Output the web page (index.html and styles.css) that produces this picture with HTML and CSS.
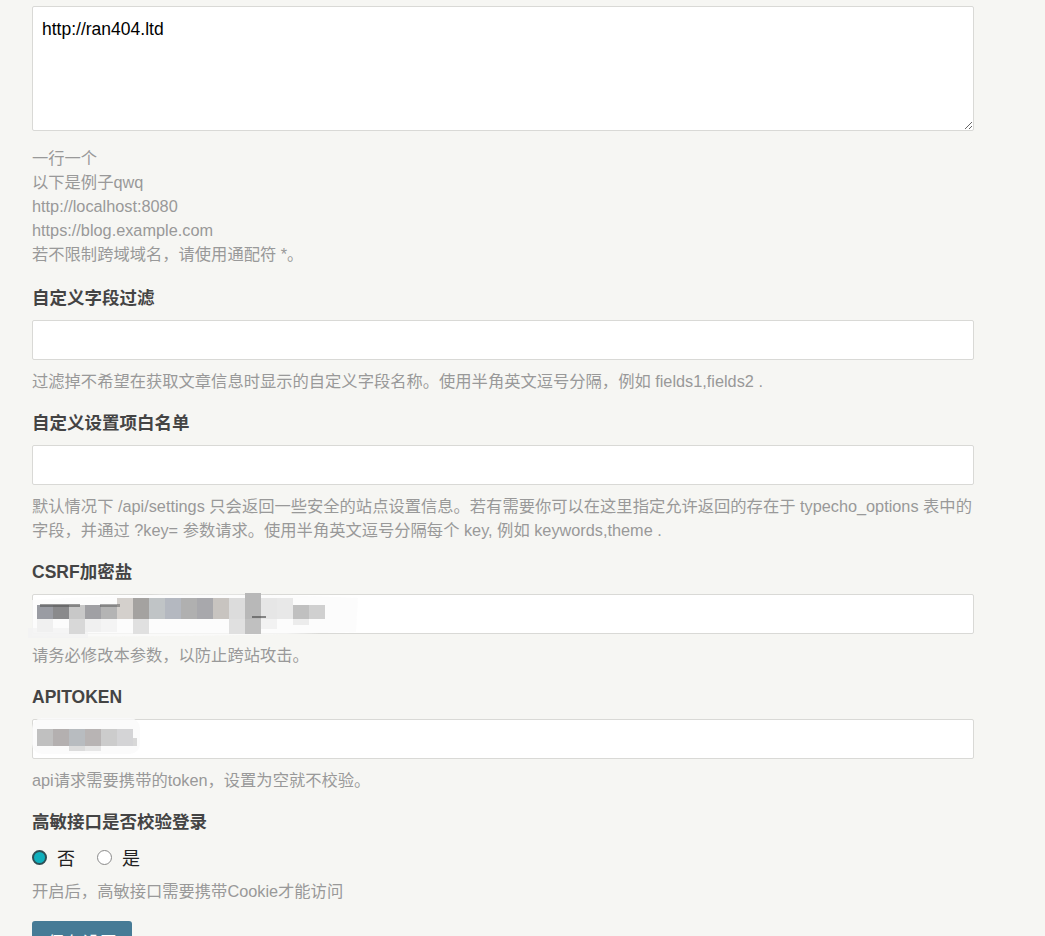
FILE: index.html
```html
<!DOCTYPE html>
<html lang="zh-CN">
<head>
<meta charset="utf-8">
<title>设置</title>
<link rel="stylesheet" href="styles.css">
</head>
<body>
<form class="options">
  <ul class="option first">
    <li>
      <textarea class="textarea">http://ran404.ltd</textarea>
      <div class="description desc-first">一行一个<br>以下是例子qwq<br>http://localhost:8080<br>https://blog.example.com<br>若不限制跨域域名，请使用通配符 *。</div>
    </li>
  </ul>
  <ul class="option">
    <li>
      <label class="label">自定义字段过滤</label>
      <input class="text" type="text">
      <div class="description">过滤掉不希望在获取文章信息时显示的自定义字段名称。使用半角英文逗号分隔，例如 fields1,fields2 .</div>
    </li>
  </ul>
  <ul class="option">
    <li>
      <label class="label">自定义设置项白名单</label>
      <input class="text" type="text">
      <div class="description">默认情况下 /api/settings 只会返回一些安全的站点设置信息。若有需要你可以在这里指定允许返回的存在于 typecho_options 表中的<br>字段，并通过 ?key= 参数请求。使用半角英文逗号分隔每个 key, 例如 keywords,theme .</div>
    </li>
  </ul>
  <ul class="option">
    <li>
      <label class="label">CSRF加密盐</label>
      <div class="field">
        <input class="text" type="text">
        <svg class="mosaic" width="340" height="52" viewBox="0 0 340 52">
          <path d="M4 12 Q150 2 330 10 L328 44 Q150 50 4 48 Z" fill="#fbfbfb" opacity="0.75"/>
          <rect x="0" y="40" width="60" height="10" fill="#f2f2f2" opacity="0.8"/>
          <rect x="9" y="17" width="16" height="14" fill="#9a9ca3"/>
          <rect x="25" y="17" width="16" height="14" fill="#8a8a8c"/>
          <rect x="41" y="17" width="16" height="14" fill="#c8c8c8"/>
          <rect x="57" y="17" width="16" height="14" fill="#a0a0a4"/>
          <rect x="73" y="17" width="16" height="14" fill="#b4b4b4"/>
          <rect x="89" y="10" width="16" height="21" fill="#d4d0cc"/>
          <rect x="105" y="10" width="16" height="21" fill="#a4a2a0"/>
          <rect x="121" y="10" width="16" height="21" fill="#c0c4c6"/>
          <rect x="137" y="10" width="16" height="21" fill="#b4b8c0"/>
          <rect x="153" y="10" width="16" height="21" fill="#b0b0b0"/>
          <rect x="169" y="10" width="16" height="21" fill="#a8a8ac"/>
          <rect x="185" y="10" width="16" height="21" fill="#c8c4c0"/>
          <rect x="201" y="10" width="16" height="21" fill="#dcdcdc"/>
          <rect x="217" y="5" width="16" height="26" fill="#b8b8b8"/>
          <rect x="233" y="10" width="16" height="21" fill="#e6e6e6"/>
          <rect x="249" y="10" width="16" height="21" fill="#e8e8e8"/>
          <rect x="265" y="17" width="16" height="14" fill="#c0c0c0"/>
          <rect x="281" y="17" width="16" height="14" fill="#d0d0d0"/>
          <rect x="9" y="31" width="16" height="13" fill="#f0f0f0"/>
          <rect x="41" y="31" width="16" height="15" fill="#d8d8d8"/>
          <rect x="57" y="31" width="16" height="13" fill="#f0f0f0"/>
          <rect x="73" y="31" width="16" height="13" fill="#f4f4f4"/>
          <rect x="105" y="31" width="16" height="15" fill="#e0e0e0"/>
          <rect x="201" y="31" width="16" height="15" fill="#e0e0e0"/>
          <rect x="217" y="31" width="16" height="15" fill="#c0c0c0"/>
          <rect x="233" y="31" width="16" height="10" fill="#f2f2f2"/>
          <rect x="265" y="31" width="16" height="6" fill="#ececec"/>
          <rect x="12" y="16" width="40" height="3" fill="#555" opacity="0.6"/>
          <rect x="72" y="16" width="20" height="3" fill="#555" opacity="0.5"/>
          <rect x="224" y="28" width="14" height="2" fill="#444" opacity="0.6"/>
        </svg>
      </div>
      <div class="description">请务必修改本参数，以防止跨站攻击。</div>
    </li>
  </ul>
  <ul class="option">
    <li>
      <label class="label">APITOKEN</label>
      <div class="field">
        <input class="text" type="text">
        <svg class="mosaic" width="140" height="52" viewBox="0 0 140 52">
          <rect x="4" y="5" width="108" height="36" rx="10" fill="#fafafa" opacity="0.8"/>
          <rect x="9" y="16" width="16" height="17" fill="#c0c0c0"/>
          <rect x="25" y="16" width="16" height="17" fill="#b4b0b0"/>
          <rect x="41" y="16" width="16" height="17" fill="#b8bcc0"/>
          <rect x="57" y="16" width="16" height="17" fill="#b8b4b4"/>
          <rect x="73" y="16" width="16" height="17" fill="#cccccc"/>
          <rect x="89" y="16" width="16" height="17" fill="#d4d4d6"/>
          <rect x="105" y="25" width="4" height="8" fill="#d8d8d8"/>
          <rect x="41" y="33" width="16" height="5" fill="#dcdcdc"/>
          <rect x="57" y="33" width="16" height="5" fill="#e6e6e6"/>
        </svg>
      </div>
      <div class="description">api请求需要携带的token，设置为空就不校验。</div>
    </li>
  </ul>
  <ul class="option">
    <li>
      <label class="label">高敏接口是否校验登录</label>
      <div class="radios">
        <span class="radio-item"><span class="radio checked"></span><span class="radio-text">否</span></span>
        <span class="radio-item"><span class="radio"></span><span class="radio-text">是</span></span>
      </div>
      <div class="description">开启后，高敏接口需要携带Cookie才能访问</div>
    </li>
  </ul>
  <div class="submit">
    <button type="button" class="btn">保存设置</button>
  </div>
</form>
</body>
</html>
```

FILE: styles.css
```css
html, body {
  margin: 0;
  padding: 0;
  background: #F6F6F3;
}
body {
  font-family: "Liberation Sans", Arial, "Noto Sans CJK SC", sans-serif;
  color: #444;
}
.options {
  width: 942px;
  padding: 6px 0 0 32px;
}
.option {
  list-style: none;
  margin: 0;
  padding: 0 0 18px 0;
}
.option.first {
  padding-bottom: 20px;
}
.label {
  display: block;
  font-size: 17.5px;
  font-weight: bold;
  line-height: 24px;
  height: 24px;
  margin-bottom: 10px;
  color: #444;
}
.textarea {
  display: block;
  box-sizing: border-box;
  width: 942px;
  height: 125px;
  margin: 0;
  padding: 10px 9px;
  border: 1px solid #D9D9D6;
  border-radius: 2px;
  background: #fff;
  font-family: "Liberation Sans", Arial, "Noto Sans CJK SC", sans-serif;
  font-size: 17.5px;
  line-height: 24px;
  color: #000;
  resize: vertical;
}
.text {
  display: block;
  box-sizing: border-box;
  width: 942px;
  height: 40px;
  margin: 0;
  padding: 0 9px;
  border: 1px solid #D9D9D6;
  border-radius: 2px;
  background: #fff;
  font-size: 17.5px;
}
.field {
  position: relative;
}
.mosaic {
  position: absolute;
  left: -4px;
  top: -6px;
}
.description {
  margin-top: 9px;
  font-size: 16.3px;
  line-height: 24px;
  color: #999;
  white-space: nowrap;
}
.description.desc-first {
  margin-top: 15px;
}
.radios {
  display: flex;
  align-items: center;
  gap: 22px;
  height: 24px;
  margin-top: 11px;
  margin-bottom: 10px;
}
.radios + .description {
  margin-top: 0;
}
.radio-item {
  display: flex;
  align-items: center;
  gap: 10px;
}
.radio {
  box-sizing: border-box;
  width: 15px;
  height: 15px;
  border-radius: 50%;
  border: 1px solid #8a8a8a;
  background: #fff;
}
.radio.checked {
  border: 2px solid #2f4f55;
  background: #0fb0bd;
}
.radio-text {
  font-family: "Noto Sans CJK SC", sans-serif;
  font-size: 18px;
  line-height: 24px;
  color: #222;
}
.btn {
  box-sizing: border-box;
  width: 100px;
  height: 40px;
  border: none;
  border-radius: 3px;
  background: #467B96;
  color: #fff;
  font-family: "Liberation Sans", Arial, "Noto Sans CJK SC", sans-serif;
  font-size: 17.5px;
  padding: 0;
}
```
